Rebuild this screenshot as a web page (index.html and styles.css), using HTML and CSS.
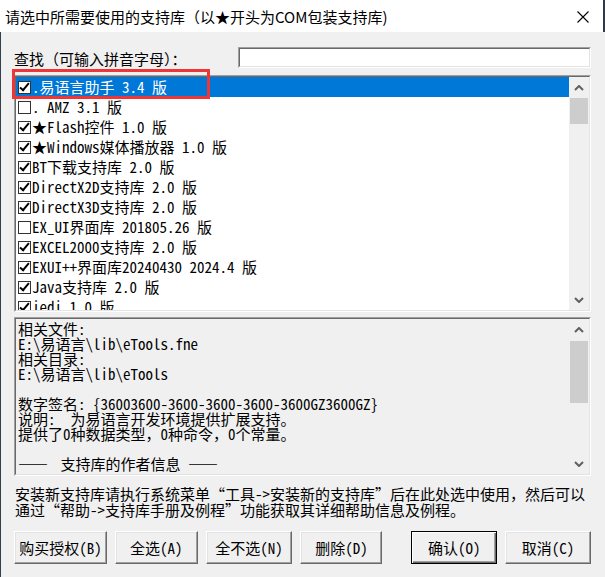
FILE: index.html
```html
<!DOCTYPE html>
<html lang="zh-CN">
<head>
<meta charset="utf-8">
<title>支持库配置</title>
<link rel="stylesheet" href="styles.css">
</head>
<body>
<div class="window">
  <div class="titlebar">
    <span class="title">请选中所需要使用的支持库（以★开头为COM包装支持库)</span>
    <svg class="close" width="12" height="12" viewBox="0 0 12 12"><path d="M0.5 0.5 L11.5 11.5 M11.5 0.5 L0.5 11.5" stroke="#000" stroke-width="1.1" fill="none"/></svg>
  </div>
  <div class="body">
    <div class="search">
      <span class="label">查找（可输入拼音字母）：</span>
      <div class="sunken field"><div class="sunken-in field-in"></div></div>
    </div>

    <div class="sunken list">
      <div class="sunken-in list-in">
        <div class="rows">
          <div class="row sel"><span class="cb on"></span><span class="txt">.易语言助手 3.4 版</span></div>
          <div class="row"><span class="cb"></span><span class="txt">. AMZ 3.1 版</span></div>
          <div class="row"><span class="cb on"></span><span class="txt">★Flash控件 1.0 版</span></div>
          <div class="row"><span class="cb on"></span><span class="txt">★Windows媒体播放器 1.0 版</span></div>
          <div class="row"><span class="cb on"></span><span class="txt">BT下载支持库 2.0 版</span></div>
          <div class="row"><span class="cb on"></span><span class="txt">DirectX2D支持库 2.0 版</span></div>
          <div class="row"><span class="cb on"></span><span class="txt">DirectX3D支持库 2.0 版</span></div>
          <div class="row"><span class="cb"></span><span class="txt">EX_UI界面库 201805.26 版</span></div>
          <div class="row"><span class="cb on"></span><span class="txt">EXCEL2000支持库 2.0 版</span></div>
          <div class="row"><span class="cb on"></span><span class="txt">EXUI++界面库20240430 2024.4 版</span></div>
          <div class="row"><span class="cb on"></span><span class="txt">Java支持库 2.0 版</span></div>
          <div class="row"><span class="cb on"></span><span class="txt">jedi 1.0 版</span></div>
        </div>
        <div class="vscroll">
          <div class="arrow"><svg width="10" height="6" viewBox="0 0 10 6"><path d="M1 5 L5 1 L9 5" stroke="#606060" stroke-width="2" fill="none"/></svg></div>
          <div class="thumb list-thumb"></div>
          <div class="track"></div>
          <div class="arrow"><svg width="10" height="6" viewBox="0 0 10 6"><path d="M1 1 L5 5 L9 1" stroke="#606060" stroke-width="2" fill="none"/></svg></div>
        </div>
      </div>
    </div>

    <div class="sunken info">
      <div class="sunken-in info-in">
        <div class="info-text">相关文件:
E:\易语言\lib\eTools.fne
相关目录:
E:\易语言\lib\eTools

数字签名: {36003600-3600-3600-3600-3600GZ3600GZ}
说明:  为易语言开发环境提供扩展支持。
提供了0种数据类型，0种命令，0个常量。

<span class="rule">——</span> 支持库的作者信息 <span class="rule">——</span></div>
        <div class="vscroll">
          <div class="arrow"><svg width="10" height="6" viewBox="0 0 10 6"><path d="M1 5 L5 1 L9 5" stroke="#606060" stroke-width="2" fill="none"/></svg></div>
          <div class="thumb info-thumb"></div>
          <div class="track"></div>
          <div class="arrow"><svg width="10" height="6" viewBox="0 0 10 6"><path d="M1 1 L5 5 L9 1" stroke="#606060" stroke-width="2" fill="none"/></svg></div>
        </div>
      </div>
    </div>

    <p class="hint">安装新支持库请执行系统菜单“工具->安装新的支持库”后在此处选中使用，然后可以<br>通过“帮助->支持库手册及例程”功能获取其详细帮助信息及例程。</p>

    <div class="buttons">
      <button class="btn b-buy">购买授权(B)</button>
      <button class="btn b-all">全选(A)</button>
      <button class="btn b-none">全不选(N)</button>
      <button class="btn b-del">删除(D)</button>
      <button class="btn btn-default b-ok">确认(O)</button>
      <button class="btn b-cancel">取消(C)</button>
    </div>
  </div>
  <div class="annot"></div>
</div>
</body>
</html>
```

FILE: styles.css
```css
html, body {
  margin: 0;
  padding: 0;
  background: #f0f0f0;
}

.window {
  position: relative;
  width: 605px;
  height: 577px;
  overflow: hidden;
  background: #f0f0f0;
  display: flex;
  flex-direction: column;
  font-family: "Noto Sans Mono CJK SC", "Noto Sans CJK SC", monospace;
  font-size: 15px;
  color: #000;
}

.titlebar {
  height: 32px;
  flex: none;
  background: #fff;
  display: flex;
  align-items: center;
  padding-left: 5px;
  padding-right: 16px;
  box-shadow: inset -2px 0 #2e3a46;
}

.title {
  flex: 1;
  font-family: "Noto Sans CJK SC", "Microsoft YaHei", sans-serif;
  font-size: 15px;
  line-height: 20px;
  white-space: nowrap;
  margin-top: 1px;
}

.close {
  display: block;
  margin-top: 1px;
}

.body {
  flex: 1;
  display: flex;
  flex-direction: column;
  padding: 0 14px 0 14px;
  box-shadow: inset 1px 0 #34404c;
}

/* search row */
.search {
  margin-top: 15px;
  height: 21px;
  display: flex;
  align-items: center;
}

.label {
  flex: 1;
  white-space: nowrap;
  line-height: 21px;
  margin-top: 2px;
}

/* sunken 3D borders */
.sunken {
  box-sizing: border-box;
  border: 1px solid;
  border-color: #a0a0a0 #ffffff #ffffff #a0a0a0;
}

.sunken-in {
  box-sizing: border-box;
  height: 100%;
  border: 1px solid;
  border-color: #696969 #e3e3e3 #e3e3e3 #696969;
}

.field {
  width: 353px;
  height: 21px;
}

.field-in {
  background: #fff;
}

/* list */
.list {
  margin-top: 7px;
  height: 237px;
}

.list-in {
  display: flex;
  background: #fff;
}

.rows {
  flex: 1;
  overflow: hidden;
}

.row {
  height: 20px;
  display: flex;
  align-items: center;
  padding-left: 2px;
  white-space: pre;
  line-height: 20px;
}

.row.sel {
  background: #0078d7;
  color: #fff;
}

.cb {
  position: relative;
  flex: none;
  box-sizing: border-box;
  width: 13px;
  height: 13px;
  border: 1px solid #333;
  background: #fff;
}

.cb.on::after {
  content: "";
  position: absolute;
  left: 3px;
  top: -1px;
  width: 3px;
  height: 8px;
  border-right: 2.5px solid #000;
  border-bottom: 2.5px solid #000;
  transform: rotate(40deg);
}

.txt {
  margin-left: 1px;
}

/* scrollbars */
.vscroll {
  width: 20px;
  flex: none;
  background: #f0f0f0;
  display: flex;
  flex-direction: column;
}

.arrow {
  height: 21px;
  flex: none;
  display: flex;
  align-items: center;
  justify-content: center;
}

.thumb {
  flex: none;
  margin: 0 1px;
  background: #cdcdcd;
}

.list-thumb {
  height: 26px;
}

.info-thumb {
  height: 62px;
  margin-top: 1px;
}

.track {
  flex: 1;
}

/* info panel */
.info {
  margin-top: 5px;
  height: 159px;
}

.info-in {
  display: flex;
  background: #f0f0f0;
}

.info-text {
  flex: 1;
  padding: 2px 0 0 2px;
  white-space: pre;
  line-height: 15px;
  overflow: hidden;
}

.rule {
  letter-spacing: 5px;
}

/* hint */
.hint {
  margin: 10px 0 0 1px;
  line-height: 16px;
  white-space: nowrap;
}

/* buttons */
.buttons {
  margin-top: 13px;
  display: flex;
  gap: 8px;
}

.btn {
  box-sizing: border-box;
  height: 33px;
  padding: 0;
  font: inherit;
  color: #000;
  background: #f0f0f0;
  border: 1px solid;
  border-color: #ffffff #696969 #696969 #ffffff;
  box-shadow: inset -1px -1px #a0a0a0, inset 1px 1px #e3e3e3;
  white-space: nowrap;
}

.btn-default {
  border-color: #000;
  box-shadow: inset 1px 1px #ffffff, inset -1px -1px #696969, inset -2px -2px #a0a0a0;
}

.b-buy { width: 93px; }
.b-all { width: 83px; }
.b-none { width: 87px; }
.b-del { width: 82px; }
.b-ok { width: 86px; margin-left: 21px; }
.b-cancel { width: 86px; }

/* red annotation box drawn over the first list item */
.annot {
  position: absolute;
  left: 12px;
  top: 69px;
  width: 198px;
  height: 30px;
  box-sizing: border-box;
  border: 3px solid #ee3636;
  pointer-events: none;
}
```
